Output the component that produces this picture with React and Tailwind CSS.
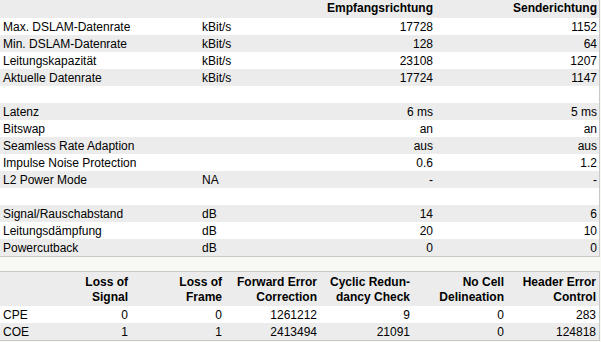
import React from 'react';

const rows = [
  { label: 'Max. DSLAM-Datenrate', unit: 'kBit/s', rx: '17728', tx: '1152' },
  { label: 'Min. DSLAM-Datenrate', unit: 'kBit/s', rx: '128', tx: '64' },
  { label: 'Leitungskapazität', unit: 'kBit/s', rx: '23108', tx: '1207' },
  { label: 'Aktuelle Datenrate', unit: 'kBit/s', rx: '17724', tx: '1147' },
  { label: '', unit: '', rx: '', tx: '' },
  { label: 'Latenz', unit: '', rx: '6 ms', tx: '5 ms' },
  { label: 'Bitswap', unit: '', rx: 'an', tx: 'an' },
  { label: 'Seamless Rate Adaption', unit: '', rx: 'aus', tx: 'aus' },
  { label: 'Impulse Noise Protection', unit: '', rx: '0.6', tx: '1.2' },
  { label: 'L2 Power Mode', unit: 'NA', rx: '-', tx: '-' },
  { label: '', unit: '', rx: '', tx: '' },
  { label: 'Signal/Rauschabstand', unit: 'dB', rx: '14', tx: '6' },
  { label: 'Leitungsdämpfung', unit: 'dB', rx: '20', tx: '10' },
  { label: 'Powercutback', unit: 'dB', rx: '0', tx: '0' },
];

const errorHeads = [
  ['Loss of', 'Signal'],
  ['Loss of', 'Frame'],
  ['Forward Error', 'Correction'],
  ['Cyclic Redun-', 'dancy Check'],
  ['No Cell', 'Delineation'],
  ['Header Error', 'Control'],
];

const errorRows = [
  { name: 'CPE', values: ['0', '0', '1261212', '9', '0', '283'] },
  { name: 'COE', values: ['1', '1', '2413494', '21091', '0', '124818'] },
];

export default function App() {
  return (
    <div
      className="w-[601px] h-[342px] bg-[#f8f8f5] text-[12px] text-black overflow-hidden"
      style={{ fontFamily: '"Liberation Sans", Arial, sans-serif' }}
    >
      <div className="w-[600px] border-r border-b border-[#c8c8c8]">
        <div className="grid grid-cols-[199px_71px_166px_1fr] h-[18px] leading-[17px] bg-[#ececec] font-bold">
          <div />
          <div />
          <div className="text-right pr-[3px]">Empfangsrichtung</div>
          <div className="text-right pr-[2px]">Senderichtung</div>
        </div>
        {rows.map((r, i) => (
          <div
            key={i}
            className={`grid grid-cols-[199px_71px_166px_1fr] h-[17px] leading-[17px] pt-[1px] ${
              i % 2 === 1 ? 'bg-[#ececec]' : 'bg-white'
            }`}
          >
            <div className="pl-[3px] whitespace-nowrap">{r.label}</div>
            <div className="pl-[3px]">{r.unit}</div>
            <div className="text-right pr-[3px]">{r.rx}</div>
            <div className="text-right pr-[2px]">{r.tx}</div>
          </div>
        ))}
      </div>

      <div className="mt-[14px] w-[600px] border-t border-r border-b border-[#c8c8c8]">
        <div className="grid grid-cols-[40px_91px_94px_95px_93px_94px_1fr] bg-[#ececec] font-bold leading-[15px] pt-[3px] pb-[1px]">
          <div />
          {errorHeads.map((h, i) => (
            <div key={i} className="text-right pr-[3px] whitespace-nowrap">
              {h[0]}
              <br />
              {h[1]}
            </div>
          ))}
        </div>
        {errorRows.map((r, i) => (
          <div
            key={r.name}
            className={`grid grid-cols-[40px_91px_94px_95px_93px_94px_1fr] h-[17px] leading-[17px] pt-[1px] ${
              i % 2 === 1 ? 'bg-[#ececec]' : 'bg-white'
            }`}
          >
            <div className="pl-[3px]">{r.name}</div>
            {r.values.map((v, j) => (
              <div key={j} className="text-right pr-[3px]">
                {v}
              </div>
            ))}
          </div>
        ))}
      </div>
    </div>
  );
}
